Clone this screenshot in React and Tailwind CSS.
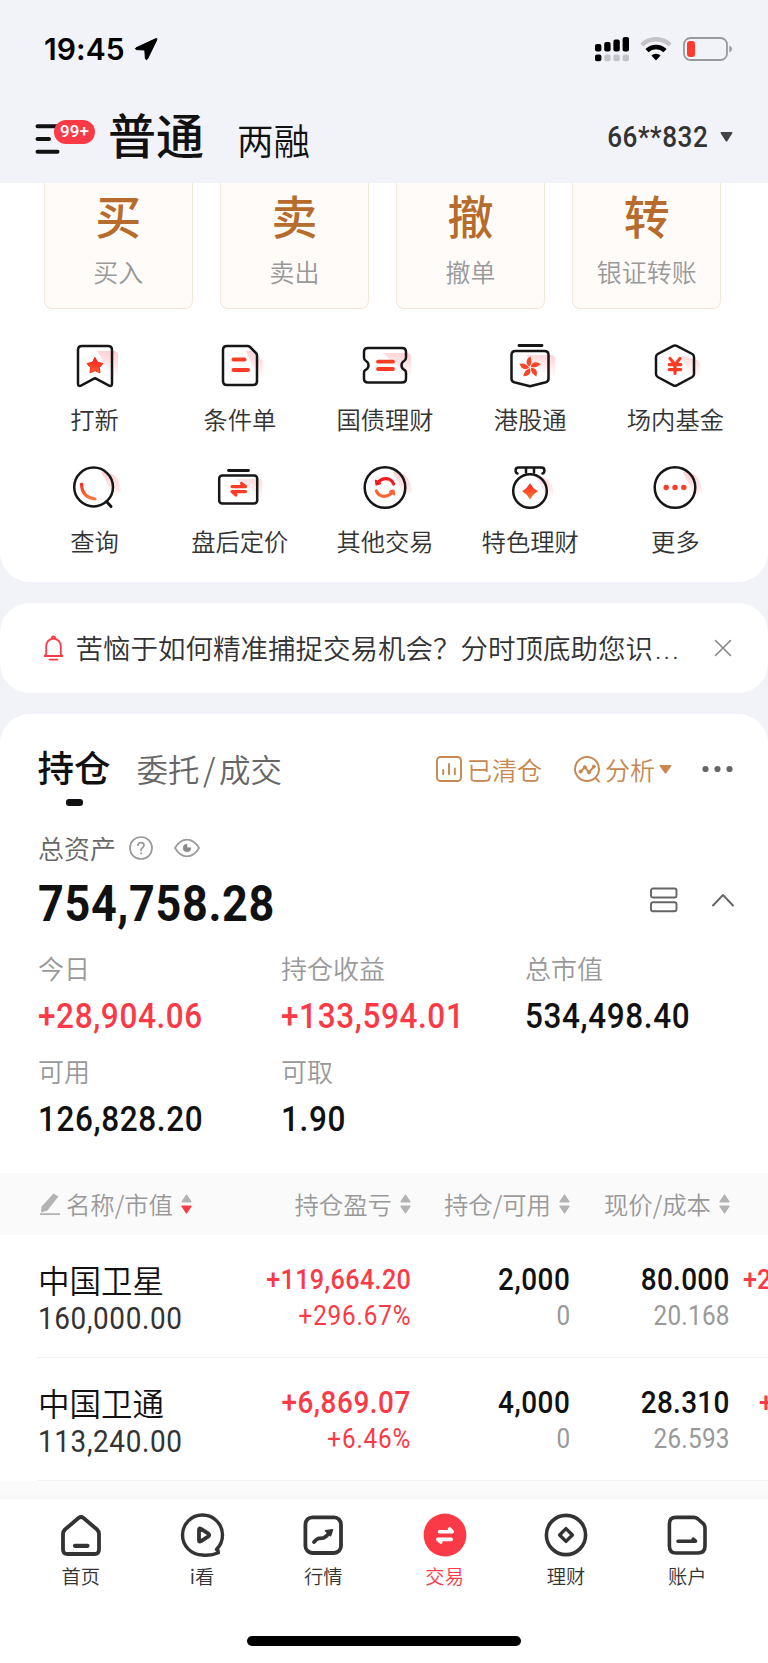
// src/App.jsx
import React, { useState } from "react";

const tradeCards = [
  { mark: "买", label: "买入" },
  { mark: "卖", label: "卖出" },
  { mark: "撤", label: "撤单" },
  { mark: "转", label: "银证转账" },
];

const stats = [
  { label: "今日", value: "+28,904.06", up: true },
  { label: "持仓收益", value: "+133,594.01", up: true },
  { label: "总市值", value: "534,498.40" },
  { label: "可用", value: "126,828.20" },
  { label: "可取", value: "1.90" },
];

const holdings = [
  {
    name: "中国卫星",
    value: "160,000.00",
    profit: "+119,664.20",
    profitClass: "text-[28px] tracking-[0.4px]",
    rate: "+296.67%",
    amount: "2,000",
    usable: "0",
    price: "80.000",
    cost: "20.168",
    today: "+2",
    todayClass: "pl-[13px]",
  },
  {
    name: "中国卫通",
    value: "113,240.00",
    profit: "+6,869.07",
    profitClass: "text-[31px] tracking-[0.6px]",
    rate: "+6.46%",
    amount: "4,000",
    usable: "0",
    price: "28.310",
    cost: "26.593",
    today: "+",
    todayClass: "pl-[29px]",
  },
];

/* ---------- condensed figures ---------- */

function Num({ children, right, className }) {
  return (
    <span className={`inline-block scale-x-90 whitespace-nowrap font-['Roboto'] ${right ? "origin-right" : "origin-left"} ${className}`}>
      {children}
    </span>
  );
}

/* ---------- status bar ---------- */

function StatusBar() {
  return (
    <div className="flex h-[98px] items-center justify-between pl-[44px] pr-[35px]">
      <div className="flex items-center gap-[9px]">
        <span className="font-['Inter'] text-[30px] font-semibold leading-none tracking-[0.1px] text-black">19:45</span>
        <svg width="24" height="24" viewBox="0 0 24 24">
          <path d="M22 1.6 L2 10.8 Q0.6 11.8 2.2 12.6 L10.8 13 L11.4 21.6 Q12.4 23.8 13.6 21.8 L22.8 2.8 Q23.2 1.2 22 1.6Z" fill="#000" stroke="#000" />
        </svg>
      </div>
      <div className="flex items-center gap-[11px]">
        <svg className="-mr-px" width="35" height="26" viewBox="0 0 35 26">
          <rect x="0" y="8" width="6.4" height="7.4" rx="2" />
          <rect x="9.2" y="6" width="6.4" height="9.4" rx="2" />
          <rect x="18.4" y="3.4" width="6.4" height="12" rx="2" />
          <rect x="27.6" y="1" width="6.4" height="14.4" rx="2" />
          <rect x="0" y="18.6" width="6.4" height="6.6" rx="2" />
          <g fill="#c4c4c8">
            <rect x="9.2" y="18.6" width="6.4" height="6.6" rx="2" />
            <rect x="18.4" y="18.6" width="6.4" height="6.6" rx="2" />
            <rect x="27.6" y="18.6" width="6.4" height="6.6" rx="2" />
          </g>
        </svg>
        <svg width="32" height="26" viewBox="0 0 32 26" fill="none">
          <path d="M1.8 9 A20.5 20.5 0 0 1 30.2 9" stroke="#c4c4c8" strokeWidth="4.4" />
          <path d="M7 14.6 A13 13 0 0 1 25 14.6" stroke="#000" strokeWidth="4.6" />
          <path d="M11.4 19.6 A6.6 6.6 0 0 1 20.6 19.6 L16 24.4Z" fill="#000" />
        </svg>
        <svg width="50" height="26" viewBox="0 0 50 26" fill="none">
          <rect x="1" y="2" width="43" height="22" rx="6.5" stroke="#98989d" strokeWidth="1.8" />
          <rect x="4" y="5" width="8" height="16" rx="3" fill="#ff3b30" />
          <path d="M46.4 9.4 Q49 10.5 49 13 Q49 15.5 46.4 16.6Z" fill="#98989d" />
        </svg>
      </div>
    </div>
  );
}

function Header() {
  return (
    <div className="flex h-[85px] items-start justify-between pl-[35px] pr-[35px]">
      <div className="flex">
        <div className="relative mt-[26px] h-8 w-[73px]">
          <svg width="26" height="32" viewBox="0 0 26 32" stroke="#111" strokeWidth="4" strokeLinecap="round">
            <path d="M2.5 2.2H22.5M2.5 15H14M2.5 27.8H22.5" />
          </svg>
          <span className="absolute left-[19px] top-[-4px] flex h-6 w-[41px] items-center justify-center rounded-full bg-[#fb3a47] font-['Roboto'] text-[17px] font-medium text-white">
            99+
          </span>
        </div>
        <span className="mt-[8px] text-[48px] font-medium leading-[54px] text-[#111]">普通</span>
        <span className="ml-[33px] mt-[22px] text-[36.5px] leading-[40px] text-[#111]">两融</span>
      </div>
      <div className="mt-[24px] flex items-center gap-[12px]">
        <Num right className="text-[29px] font-medium leading-[30px] tracking-[0.6px] text-[#333]">66**832</Num>
        <svg width="13" height="10" viewBox="0 0 13 10" fill="#444">
          <path d="M1.2 0H11.8Q13 .4 12.2 1.5L7.2 9.2Q6.5 10 5.8 9.2L.8 1.5Q0 .4 1.2 0Z" />
        </svg>
      </div>
    </div>
  );
}

/* ---------- shortcut icons ---------- */

function Shortcut({ label, children }) {
  return (
    <div className="flex h-[121.5px] flex-col items-center">
      <svg className="overflow-visible" width="48" height="44" viewBox="0 0 48 44" fill="none" stroke="#161616" strokeWidth="2.5" strokeLinecap="round" strokeLinejoin="round">
        {children}
      </svg>
      <span className="mt-[16px] text-[24.3px] leading-[30px] text-[#333]">{label}</span>
    </div>
  );
}

function Gradients() {
  return (
    <svg className="absolute" width="0" height="0">
      <defs>
        <linearGradient id="hot" gradientUnits="userSpaceOnUse" x1="0" y1="12" x2="0" y2="34">
          <stop offset="0" stopColor="#f8101c" />
          <stop offset="1" stopColor="#ff7a35" />
        </linearGradient>
        <linearGradient id="glow" gradientUnits="userSpaceOnUse" x1="44" y1="8" x2="38" y2="32">
          <stop offset="0" stopColor="#ff4b55" stopOpacity=".27" />
          <stop offset="1" stopColor="#ff4b55" stopOpacity="0" />
        </linearGradient>
      </defs>
    </svg>
  );
}

function ShortcutGrid() {
  const glow = { fill: "url(#glow)", stroke: "none" };
  const hot = { fill: "url(#hot)", stroke: "none" };
  return (
    <div className="grid grid-cols-5 pl-[22px] pr-[20px] pt-[35px]">
      <Shortcut label="打新">
        <path d="M26 7H43Q47 7 47 11V33H41Z" {...glow} />
        <path d="M11 2H37Q41 2 41 6V39.5Q41 43 37.6 41.4L24 34.2L10.4 41.4Q7 43 7 39.5V6Q7 2 11 2Z" />
        <path d="M24 13.6L26.7 18.3L32 19.5L28.4 23.5L29 28.8L24 26.7L19 28.8L19.6 23.5L16 19.5L21.3 18.3Z" {...hot} stroke="#f92b20" strokeWidth="1" />
      </Shortcut>
      <Shortcut label="条件单">
        <path d="M30 7H37L47 17V34H41Z" {...glow} />
        <path d="M11 2H31.5Q33 2 34 3L40 9Q41 10 41 11.5V37Q41 41 37 41H11Q7 41 7 37V6Q7 2 11 2Z" />
        <path d="M17.5 15.5H28.5M17.5 26H32" stroke="#f93c25" strokeWidth="4" />
      </Shortcut>
      <Shortcut label="国债理财">
        <path d="M22 9H46Q50 9 50 13V30H44Z" {...glow} />
        <path d="M7 4H41Q45 4 45 8V13.5Q45 16 43 17Q40.5 18.3 40.5 21.3Q40.5 24.3 43 25.6Q45 26.5 45 29V34.5Q45 38.5 41 38.5H7Q3 38.5 3 34.5V29Q3 26.5 5 25.6Q7.5 24.3 7.5 21.3Q7.5 18.3 5 17Q3 16 3 13.5V8Q3 4 7 4Z" />
        <path d="M17 17.7H32M17 25H32" stroke="#f93c25" strokeWidth="3.8" />
      </Shortcut>
      <Shortcut label="港股通">
        <path d="M20 11H45Q49 11 49 15V33H43Z" {...glow} />
        <path d="M13 1.5H36" strokeWidth="2.8" />
        <path d="M9.5 7H38.5Q42.5 7 42.5 11V34.5Q42.5 37.5 39.8 38.3L24 42.2L8.2 38.3Q5.5 37.5 5.5 34.5V11Q5.5 7 9.5 7Z" />
        {[0, 72, 144, 216, 288].map((deg) => (
          <path key={deg} d="M23.6 22.6C19.6 20.5 19.2 15.2 24.6 12.2C24 14.4 27.6 17 23.6 22.6Z" transform={`rotate(${deg} 24 23.4)`} fill="#f9452a" stroke="none" />
        ))}
      </Shortcut>
      <Shortcut label="场内基金">
        <path d="M30 12L44 15Q49 17 49 20V38L43 40Z" {...glow} />
        <path d="M22.3 1.9Q24 1 25.7 1.9L41.3 10Q43 11 43 13V30Q43 32 41.3 33L25.7 41.3Q24 42.2 22.3 41.3L6.7 33Q5 32 5 30V13Q5 11 6.7 10Z" />
        <path d="M19 14.5L24 20.5L29 14.5M18.2 20.6H29.8M18.2 25.6H29.8M24 20.6V29.5" stroke="#f93c25" strokeWidth="3.2" />
      </Shortcut>
      <Shortcut label="查询">
        <path d="M30 6Q48 5 50 26L43 30Z" {...glow} />
        <circle cx="22.6" cy="21" r="19.4" />
        <path d="M35.5 35.5L40 40.6" strokeWidth="3" />
        <path d="M10.6 18Q10.5 31 24 33" stroke="url(#hot)" strokeWidth="3.2" />
      </Shortcut>
      <Shortcut label="盘后定价">
        <path d="M20 13H42Q46 13 46 17V31H40Z" {...glow} />
        <path d="M12.5 4.5H32.5" strokeWidth="2.8" />
        <rect x="3.2" y="9.4" width="38" height="28" rx="3" />
        <path d="M16 20.6H29.5L25.5 17.5M29.5 25.6H16L20 29" stroke="#f93c25" strokeWidth="3.2" />
      </Shortcut>
      <Shortcut label="其他交易">
        <path d="M32 6Q49 5 51 26L43 30Z" {...glow} />
        <circle cx="24" cy="21.5" r="20.3" />
        <path d="M17 16.5Q21 12 26.5 12.8Q31 13.8 32.6 18" stroke="#f51a1f" strokeWidth="3.2" />
        <path d="M31 26.5Q27 31 21.5 30.2Q17 29.2 15.4 25" stroke="#fb6235" strokeWidth="3.2" />
        <path d="M14.8 14.5L15.4 18.6L19 17.5Z" fill="#f51a1f" stroke="#f51a1f" strokeWidth="2" />
        <path d="M33.2 28.5L32.6 24.4L29 25.5Z" fill="#fb6235" stroke="#fb6235" strokeWidth="2" />
      </Shortcut>
      <Shortcut label="特色理财">
        <path d="M30 10Q46 11 48 28L41 32Z" {...glow} />
        <circle cx="24" cy="25" r="16.8" />
        <path d="M11.5 7.5Q9.6 7 9.6 4.5Q9.6 1.6 12.5 1.6H35.5Q38.4 1.6 38.4 4.5Q38.4 7 36.5 7.5M20 2V6.5M28 2V6.5" />
        <path d="M24 17.2Q27 22.4 31.8 25.2Q27 28 24 33.4Q21 28 16.2 25.2Q21 22.4 24 17.2Z" {...hot} />
      </Shortcut>
      <Shortcut label="更多">
        <path d="M32 6Q49 5 51 26L43 30Z" {...glow} />
        <circle cx="24" cy="21.5" r="20.3" />
        <g {...hot}>
          <circle cx="15.2" cy="21.5" r="2.7" />
          <circle cx="24" cy="21.5" r="2.7" />
          <circle cx="32.8" cy="21.5" r="2.7" />
        </g>
      </Shortcut>
    </div>
  );
}

/* ---------- notice ---------- */

function Notice({ onClose }) {
  return (
    <div className="mt-[21px] flex h-[90px] items-center rounded-[30px] bg-white pl-[43px] pr-[36px]">
      <svg width="21" height="26" viewBox="0 0 21 26" fill="none" stroke="#fb3a47" strokeWidth="1.8" strokeLinecap="round" strokeLinejoin="round">
        <path d="M3.2 19V11Q3.6 4.4 10.5 3.6Q17.4 4.4 17.8 11V19L19.4 21H1.6ZM8.6 3.6Q8.8 1.4 10.5 1.4Q12.2 1.4 12.4 3.6M6.5 24.6H14.5" />
      </svg>
      <span className="ml-[11.5px] flex-1 whitespace-nowrap text-[27.5px] leading-[36px] text-[#333]">
        苦恼于如何精准捕捉交易机会？分时顶底助您识<span className="pl-[2px] font-['Roboto'] tracking-[2px]">...</span>
      </span>
      <button type="button" onClick={onClose}>
        <svg width="18" height="18" viewBox="0 0 18 18" stroke="#888" strokeWidth="1.6" strokeLinecap="round">
          <path d="M1.5 1.5L16.5 16.5M16.5 1.5L1.5 16.5" />
        </svg>
      </button>
    </div>
  );
}

/* ---------- holdings ---------- */

function HoldingsTabs() {
  return (
    <div className="flex h-[92px] items-start justify-between pl-[37.5px] pr-[35px]">
      <div className="flex">
        <div className="flex flex-col items-center">
          <span className="mt-[31px] text-[36.5px] font-medium leading-[44px] text-[#111]">持仓</span>
          <span className="mt-[10px] h-[7px] w-[17px] rounded-[3px] bg-[#111]" />
        </div>
        <span className="ml-[26px] mt-[32px] text-[31.5px] leading-[44px] text-[#666]">
          委托<span className="px-[3.5px]">/</span>成交
        </span>
      </div>
      <div className="mt-[39px] flex items-center text-[25px] leading-[32px] text-[#c68850]">
        <svg width="26" height="26" viewBox="0 0 26 26" fill="none" stroke="#c68850" strokeWidth="1.9" strokeLinecap="round">
          <rect x="1" y="1" width="24" height="24" rx="3.5" />
          <path d="M7.2 14V18.2M13 8V18.2M18.8 12.5V18.2" />
        </svg>
        <span className="ml-[5px]">已清仓</span>
        <svg className="ml-[32px]" width="27" height="27" viewBox="0 0 27 27" fill="none" stroke="#c68850" strokeWidth="1.9" strokeLinecap="round" strokeLinejoin="round">
          <circle cx="13" cy="13" r="12" />
          <path d="M22 22.5L25 25.6M6.6 15.6L10.8 11.2L15 16.4L19.8 10.6" />
          <g fill="#c68850" strokeWidth=".8">
            <circle cx="6.6" cy="15.6" r="1.6" />
            <circle cx="10.8" cy="11.2" r="1.6" />
            <circle cx="15" cy="16.4" r="1.6" />
            <circle cx="19.8" cy="10.6" r="1.6" />
          </g>
        </svg>
        <span className="ml-[4px]">分析</span>
        <svg className="ml-[4px]" width="13" height="9" viewBox="0 0 13 9" fill="#c68850">
          <path d="M1.2 0H11.8Q13 .3 12.2 1.3L7.2 8.2Q6.5 9 5.8 8.2L.8 1.3Q0 .3 1.2 0Z" />
        </svg>
        <svg className="ml-[30px]" width="31" height="8" viewBox="0 0 31 8" fill="#666">
          <circle cx="3.5" cy="4" r="3.1" />
          <circle cx="15.5" cy="4" r="3.1" />
          <circle cx="27.5" cy="4" r="3.1" />
        </svg>
      </div>
    </div>
  );
}

function Assets() {
  return (
    <div className="px-[38px]">
      <div className="flex h-[84px] items-center text-[26px] leading-[36px] text-[#666]">
        <span>总资产</span>
        <svg className="ml-[13px]" width="24" height="24" viewBox="0 0 24 24" fill="none" stroke="#999" strokeWidth="1.7" strokeLinecap="round">
          <circle cx="12" cy="12" r="11" />
          <path d="M9 9.4Q9.2 6.6 12 6.6Q15 6.6 15 9.2Q15 10.6 13.4 11.8Q12 12.8 12 14.4M12 17.2V17.4" />
        </svg>
        <svg className="ml-[21px]" width="26" height="20" viewBox="0 0 26 20" fill="none" stroke="#999" strokeWidth="1.7">
          <path d="M1 10Q6 1.6 13 1.6Q20 1.6 25 10Q20 18.4 13 18.4Q6 18.4 1 10Z" />
          <path d="M13 6.2V9.8H16.8A3.8 3.8 0 1 1 13 6.2Z" fill="#888" stroke="#888" strokeWidth=".6" />
        </svg>
      </div>
      <div className="flex h-[24px] items-center justify-between">
        <Num className="mt-[4px] text-[50px] font-bold leading-none tracking-[0.7px] text-[#111]">754,758.28</Num>
        <div className="-mr-[4px] -mt-[4px] flex items-center">
          <svg width="28" height="26" viewBox="0 0 28 26" fill="none" stroke="#666" strokeWidth="1.9">
            <rect x="1" y="1.5" width="25.5" height="9" rx="2" />
            <rect x="1" y="15.3" width="25.5" height="9" rx="2" />
          </svg>
          <svg className="ml-[34px]" width="22" height="14" viewBox="0 0 22 14" fill="none" stroke="#666" strokeWidth="1.9" strokeLinecap="round" strokeLinejoin="round">
            <path d="M1 12.5L11 2L21 12.5" />
          </svg>
        </div>
      </div>
      <div className="mt-[36px] grid grid-cols-[243px_244px_1fr]">
        {stats.map((s) => (
          <div key={s.label} className="h-[102.5px]">
            <div className="text-[26px] leading-[36px] text-[#999]">{s.label}</div>
            <div className="mt-[12px] h-[38px]">
              <Num className={`text-[35px] font-medium leading-[38px] tracking-[0.7px] ${s.up ? "text-[#fb3a47]" : "text-[#111]"}`}>{s.value}</Num>
            </div>
          </div>
        ))}
      </div>
    </div>
  );
}

function SortLabel({ text, active }) {
  return (
    <div className="flex items-center justify-end gap-[8px]">
      <span className="whitespace-nowrap">{text}</span>
      <svg className="shrink-0" width="11" height="20" viewBox="0 0 11 20" fill="#b3b3b3">
        <path d="M5.5 0L10.6 7.6Q10.6 8.4 9.8 8.4H1.2Q.4 8.4 .4 7.6Z" />
        <path d="M5.5 20L10.6 12.4Q10.6 11.6 9.8 11.6H1.2Q.4 11.6 .4 12.4Z" fill={active ? "#fb3a47" : "#b3b3b3"} />
      </svg>
    </div>
  );
}

function HoldingsTable() {
  return (
    <div>
      <div className="mt-[18px] flex h-[62px] items-center bg-[#fafafa] pl-[39px] text-[24.4px] leading-[32px] text-[#999]">
        <svg width="23" height="24" viewBox="0 0 23 24" fill="#b3b3b3">
          <path d="M14.5 1.4L19.4 4.6L8.4 18.4L2 20.6L2.6 14.4Z" />
          <rect x="1" y="21.2" width="20" height="1.8" />
        </svg>
        <div className="ml-[4px] w-[126px]"><SortLabel text="名称/市值" active /></div>
        <div className="w-[219px]"><SortLabel text="持仓盈亏" /></div>
        <div className="w-[159px]"><SortLabel text="持仓/可用" /></div>
        <div className="w-[160px]"><SortLabel text="现价/成本" /></div>
      </div>
      {holdings.map((h) => (
        <div key={h.name} className="ml-[37px] flex h-[123px] overflow-hidden border-b border-[#f2f2f2] pt-[26px]">
          <div className="w-[180px] pl-[1px]">
            <div className="text-[31.5px] leading-[36px] text-[#111]">{h.name}</div>
            <div className="mt-[4px] h-[36px]">
              <Num className="text-[31px] font-normal leading-[36px] tracking-[0.7px] text-[#333]">{h.value}</Num>
            </div>
          </div>
          <div className="flex w-[194px] flex-col items-end text-[#fb3a47]">
            <Num right className={`font-medium leading-[38px] ${h.profitClass}`}>{h.profit}</Num>
            <Num right className="text-[27px] font-normal leading-[35px] tracking-[0.9px]">{h.rate}</Num>
          </div>
          <div className="flex w-[159px] flex-col items-end">
            <Num right className="text-[31px] font-medium leading-[38px] tracking-[0.6px] text-[#111]">{h.amount}</Num>
            <Num right className="text-[27px] font-normal leading-[35px] text-[#999]">{h.usable}</Num>
          </div>
          <div className="flex w-[160px] flex-col items-end">
            <Num right className="text-[31px] font-medium leading-[38px] tracking-[0.3px] text-[#111]">{h.price}</Num>
            <Num right className="text-[27px] font-normal leading-[35px] tracking-[0.3px] text-[#999]">{h.cost}</Num>
          </div>
          <div className={`w-[38px] overflow-hidden ${h.todayClass}`}>
            <Num className="text-[28px] font-medium leading-[38px] text-[#fb3a47]">{h.today}</Num>
          </div>
        </div>
      ))}
    </div>
  );
}

/* ---------- bottom nav ---------- */

function NavItem({ label, active, children }) {
  return (
    <div className="flex flex-1 flex-col items-center">
      <svg width="48" height="48" viewBox="0 0 48 48" fill="none" stroke="#333" strokeWidth="3.8" strokeLinecap="round" strokeLinejoin="round">
        {children}
      </svg>
      <span className={`mt-[5px] text-[19.3px] leading-[24px] ${active ? "text-[#fb3a47]" : "text-[#333]"}`}>{label}</span>
    </div>
  );
}

function BottomNav() {
  return (
    <div className="h-[164px] bg-white">
      <div className="flex px-[20px] pt-[12px]">
        <NavItem label="首页">
          <path d="M21.5 7Q24 5 26.5 7L40 18.5Q42 20.4 42 23V38.5Q42 43 37.5 43H10.5Q6 43 6 38.5V23Q6 20.4 8 18.5Z" />
          <path d="M18 34.8H30.5" strokeWidth="4.2" />
        </NavItem>
        <NavItem label="i看">
          <path d="M40 39.5L38.5 38.5Q44.5 32.5 44.5 24A20 20 0 1 0 24.5 44Q33 45 40.3 41.8Z" strokeWidth="3.4" />
          <path d="M21 18.8V29.2Q21 31.4 23 30.2L30.4 25.4Q32 24 30.4 22.6L23 17.8Q21 16.6 21 18.8Z" />
        </NavItem>
        <NavItem label="行情">
          <rect x="6.4" y="6.4" width="35.6" height="35.6" rx="7" />
          <path d="M15 31Q17 28.6 19.5 27.4Q24.5 27.8 27 25.4L31 21.5" />
          <path d="M26.5 19.8L33.5 18.8L31.6 24.8Z" fill="#333" strokeWidth="1.5" />
        </NavItem>
        <NavItem label="交易" active>
          <circle cx="24" cy="24" r="21.4" fill="#fb3a47" stroke="none" />
          <path d="M18.5 20.8H31.2L28.6 17.8M30.2 28.4H16.8L19.8 31" stroke="#fff" strokeWidth="3.6" />
        </NavItem>
        <NavItem label="理财">
          <circle cx="24" cy="24" r="19.6" strokeWidth="3.6" />
          <path d="M24 17.6L30.4 24L24 30.4L17.6 24Z" strokeWidth="3.4" />
        </NavItem>
        <NavItem label="账户">
          <path d="M13 6.4H30.5Q33 6.4 35 8L40.2 12.6Q42 14.4 42 17V35Q42 42 35 42H13Q6.4 42 6.4 35V13Q6.4 6.4 13 6.4Z" strokeWidth="3.6" />
          <path d="M15 30.2H32.5L30.2 28.2" strokeWidth="3.6" />
        </NavItem>
      </div>
      <div className="mx-auto mt-[48px] h-[10px] w-[274px] rounded-full bg-black" />
    </div>
  );
}

export default function App() {
  const [showNotice, setShowNotice] = useState(true);

  return (
    <div className="flex h-[1663px] w-[768px] flex-col overflow-hidden bg-[#f2f3f9] font-['Noto_Sans_CJK_SC',sans-serif] [font-weight:350]">
      <Gradients />
      <StatusBar />
      <Header />

      <div className="h-[399px] rounded-b-[30px] bg-white">
        <div className="flex justify-between pl-[43.5px] pr-[46.5px]">
          {tradeCards.map((c) => (
            <div key={c.label} className="flex h-[126px] w-[149.5px] flex-col items-center rounded-b-lg border border-t-0 border-[#f6e5d6] bg-[#fffbf9]">
              <span className="mt-[4px] text-[46px] font-medium leading-[54px] text-[#b56c2c]">{c.mark}</span>
              <span className="mt-[14px] text-[25px] leading-[32px] text-[#999]">{c.label}</span>
            </div>
          ))}
        </div>
        <ShortcutGrid />
      </div>

      {showNotice && <Notice onClose={() => setShowNotice(false)} />}

      <div className="mt-[21px] flex-1 rounded-t-[30px] bg-white">
        <HoldingsTabs />
        <Assets />
        <HoldingsTable />
        <div className="h-[18px] bg-linear-to-b from-[#fcfcfc] to-[#f8f8f8]" />
        <BottomNav />
      </div>
    </div>
  );
}
